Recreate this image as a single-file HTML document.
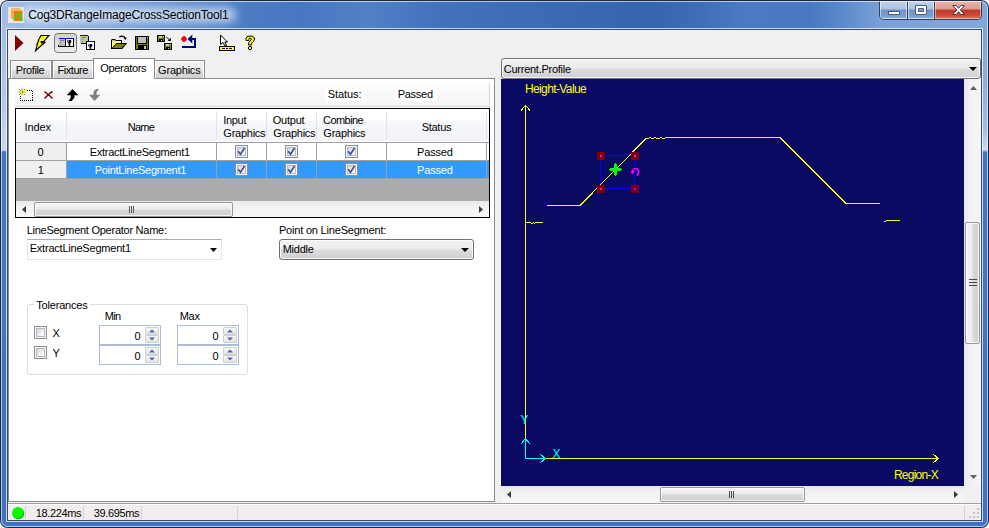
<!DOCTYPE html>
<html><head><meta charset="utf-8"><title>Cog3DRangeImageCrossSectionTool1</title>
<style>
*{box-sizing:border-box;margin:0;padding:0}
html,body{width:989px;height:528px;overflow:hidden;background:#fff}
body{font-family:"Liberation Sans","DejaVu Sans",sans-serif;font-size:11px;color:#000;position:relative}
#win{position:absolute;left:0;top:0;width:989px;height:528px;border-radius:8px;overflow:hidden;background:#3f72c2}
#win div,#win span,#win svg{position:absolute}
.t{white-space:nowrap;line-height:13px;font-size:11px}
#tbar{left:0;top:0;width:989px;height:30px;background:linear-gradient(90deg,#a4c0e8 0,#4a7bc3 250px,#4878c0 300px,#5080c6 370px,#4272bb 440px,#3e6eb8 500px,#3565ae 650px,#3e6eb8 700px,#4a7bc3 745px,#4979c2 810px,#5686ca 835px,#6b95d2 862px,#7ba1d8 882px,#82a7db 989px)}
#tgl{left:22px;top:8px;width:214px;height:14px;border-radius:7px;background:rgba(255,255,255,.66);filter:blur(5px)}
#fl{left:0;top:30px;width:8px;height:498px;background:linear-gradient(180deg,#a2bfe7 0,#b0c8eb 70px,#c8d8f0 120px,#4377c4 122px,#3f72c2 100%)}
#fr{left:981px;top:30px;width:8px;height:498px;background:linear-gradient(180deg,#7ea2d7 0,#9fbbe4 95px,#c9d9f0 120px,#4377c4 122px,#3f72c2 100%)}
#fb{left:0;top:520px;width:989px;height:8px;background:#3f72c2}
#fline{left:0;top:0;width:989px;height:528px;border-radius:8px;box-shadow:inset 0 0 0 1px #1a2843,inset 0 0 0 2px rgba(255,255,255,.62)}
#client{left:8px;top:30px;width:973px;height:490px;background:#f0f0f0;box-shadow:0 0 0 1px #3d4c68,0 0 0 2px rgba(255,255,255,.7)}
/* caption buttons */
#cap{left:879px;top:0;width:103px;height:20px;border:1px solid #34425e;border-top:0;border-radius:0 0 5px 5px;overflow:hidden;background:#6d92c6}
#cap div{top:0;height:19px}
.cb{background:linear-gradient(180deg,#c3d3ea 0,#aec3e2 48%,#6e93c7 52%,#7b9fd0 85%,#98b5dd 100%);box-shadow:inset 0 0 0 1px rgba(255,255,255,.55)}
#cbx{background:linear-gradient(180deg,#ecb9b0 0,#dc9a90 48%,#c2382a 52%,#cb4936 80%,#de7a5e 100%);box-shadow:inset 0 0 0 1px rgba(255,255,255,.45)}
/* tabs */
.tab{top:60px;height:18px;border:1px solid #898c95;border-bottom:0;background:linear-gradient(180deg,#f2f2f2 0,#ebebeb 9px,#dddddd 10px,#cfcfcf 100%);box-shadow:inset 1px 1px 0 #fcfcfc,inset -1px 0 0 #fcfcfc}
#tabsel{left:93px;top:58px;width:62px;height:21px;border:1px solid #898c95;border-bottom:0;background:#fff}
#tabpage{left:8px;top:78px;width:487px;height:424px;border:1px solid #898c95;background:#fff}
/* grid */
#grid{left:15px;top:108px;width:475px;height:110px;border:1px solid #000;background:#ababab;overflow:hidden}
.vl{width:1px;background:#a0a0a0}
.hl{height:1px;background:#a0a0a0}
.chk{width:13px;height:13px;border:1px solid #8e8f8f;background:#f4f4f4;box-shadow:inset 0 0 0 1px #f4f4f4}
.chk i{position:absolute;left:1px;top:1px;width:9px;height:9px;background:linear-gradient(135deg,#cfd3d9,#f2f2f2 60%,#fcfcfc);border:1px solid #b5bcc6}
.btn{border:1px solid #707070;border-radius:3px;background:linear-gradient(180deg,#f2f2f2 0,#ebebeb 48%,#dddddd 52%,#cfcfcf 100%);box-shadow:inset 0 0 0 1px rgba(255,255,255,.8)}
.num{width:62px;height:20px;border:1px solid #abbcd8;background:#fff}
.sb{background:#f0f0f0}
.thh{border:1px solid #979797;border-radius:2px;background:linear-gradient(180deg,#f7f7f7 0,#e9e9e9 48%,#d9d9d9 52%,#cfcfcf 100%);box-shadow:inset 0 0 0 1px rgba(255,255,255,.75)}
.thv{border:1px solid #979797;border-radius:2px;background:linear-gradient(90deg,#f7f7f7 0,#e9e9e9 48%,#d9d9d9 52%,#cfcfcf 100%);box-shadow:inset 0 0 0 1px rgba(255,255,255,.75)}
</style></head><body>
<div id="win">
<div id="tbar"></div><div id="tgl"></div><div id="fl"></div><div id="fr"></div><div id="fb"></div>
<div id="client"></div>
<svg style="left:8px;top:7px" width="16" height="16" viewBox="0 0 16 16">
<rect x="0" y="0" width="16" height="16" fill="#e9e6e2"/>
<polygon points="3,1 6,4 6,14 3,10.500" fill="#f9aa4e"/>
<polygon points="3,1 12,1 14.500,4 6,4" fill="#fbb55e"/>
<rect x="6" y="4" width="8.500" height="10" fill="#e07b10"/>
<polyline points="6,12.500 9.800,7.500 13.300,7.500 13.300,12.500 15,12.500" fill="none" stroke="#08f020" stroke-width="1.300"/>
</svg>
<div id="cap">
<div class="cb" style="left:0;width:27px"></div>
<div style="left:27px;width:1px;background:#34425e"></div>
<div class="cb" style="left:28px;width:26px"></div>
<div style="left:54px;width:1px;background:#34425e"></div>
<div id="cbx" style="left:55px;width:46px"></div>
</div>
<svg style="left:879px;top:0" width="103" height="20" viewBox="879 0 103 20">
<rect x="888.5" y="11.5" width="11" height="3" fill="#fff" stroke="#4b5a78" stroke-width="1"/>
<path d="M915.5 5.500h11v9h-11z M918.5 8.500v3h5v-3z" fill="#fff" fill-rule="evenodd" stroke="#4b5a78" stroke-width="1"/>
<path d="M952.700 5.500h3.600l2.300 2.800 2.300-2.800h3.600l-4.100 4.500 4.100 4.500h-3.600l-2.300-2.800-2.300 2.800h-3.600l4.100-4.500z" fill="#fff" stroke="#53363a" stroke-width="1" stroke-linejoin="round"/>
</svg>

<svg style="left:8px;top:30px" width="260" height="27" viewBox="8 30 260 27" shape-rendering="crispEdges">
<defs><linearGradient id="pb" x1="0" y1="0" x2="0" y2="1"><stop offset="0" stop-color="#d0d0d0"/><stop offset="1" stop-color="#ececec"/></linearGradient>
<pattern id="dith" width="2" height="2" patternUnits="userSpaceOnUse"><rect width="2" height="2" fill="#ffff00"/><rect width="1" height="1" fill="#fff"/><rect x="1" y="1" width="1" height="1" fill="#fff"/></pattern></defs>
<!-- run -->
<polygon points="15,35 23.500,43 15,51" fill="#800000" shape-rendering="auto"/>
<!-- lightning -->
<polygon points="41,35.500 49,35.500 43.800,41.400 45,42.200 35.500,50.700 37.300,44.800 36.800,44.600 38.700,40.600 38.300,40.300" fill="#ffff00" stroke="#000" stroke-width="1.150" shape-rendering="auto" stroke-linejoin="miter"/><polygon points="40.600,41.100 44.800,41.100 43,43.500 40.900,43.400" fill="#000" shape-rendering="auto"/>
<!-- pressed button -->
<rect x="54.500" y="33.500" width="22" height="19" rx="3" fill="url(#pb)" stroke="#747474" shape-rendering="auto"/>
<rect x="59" y="38" width="15" height="9" fill="#000"/><rect x="58" y="45" width="1" height="2" fill="#000"/>
<rect x="59" y="38" width="6" height="1" fill="#0000ff"/><rect x="66" y="38" width="7" height="1" fill="#0000ff"/>
<rect x="59" y="39" width="6" height="7" fill="#c0c0c0"/><rect x="66" y="39" width="7" height="7" fill="#fff"/>
<rect x="60" y="40" width="4" height="1" fill="#808080"/><rect x="60" y="42" width="1" height="1" fill="#808080"/><rect x="60" y="44" width="1" height="1" fill="#808080"/>
<g shape-rendering="auto"><rect x="67.300" y="40.100" width="4" height="2.800" rx=".8" fill="#000"/><rect x="68.600" y="42.500" width="1.700" height="3.200" fill="#000"/><circle cx="68.400" cy="41.200" r=".6" fill="#fff"/></g>
<!-- floating -->
<rect x="81" y="36" width="8" height="8" fill="#000"/><rect x="80" y="36" width="8" height="7" fill="#c0c0c0"/><rect x="80" y="35" width="8" height="1" fill="#0000c0"/>
<rect x="82" y="37" width="4" height="1" fill="#808080"/><rect x="82" y="39" width="1" height="1" fill="#808080"/><rect x="82" y="41" width="1" height="1" fill="#808080"/>
<rect x="86" y="41" width="9" height="9" fill="#000"/><rect x="87" y="42" width="7" height="7" fill="#fff"/><rect x="87" y="41" width="7" height="1" fill="#0000ff"/>
<g shape-rendering="auto"><rect x="88.300" y="44" width="4" height="2.700" rx=".8" fill="#000"/><rect x="89.600" y="46.300" width="1.700" height="2.600" fill="#000"/><circle cx="89.400" cy="45.100" r=".6" fill="#fff"/></g>
<!-- open -->
<g shape-rendering="auto">
<polygon points="111,40 112,39 115,39 116,40 122,40 122,43 127.200,43 122.300,49 111,49" fill="#000"/>
<polygon points="112,40.200 115,40.200 116,41 121,41 121,43 116.300,43 112,47.800" fill="url(#dith)"/>
<polygon points="112.600,48 116.400,44 125.200,44 121.600,48" fill="#808000"/>
<path d="M119.300 37.300 q3.200 -2.600 6 .6" fill="none" stroke="#000" stroke-width="1.100"/><polygon points="123.300,37.800 126.800,37.600 125.600,40" fill="#000"/>
</g>
<!-- save -->
<rect x="135" y="36" width="14" height="14" fill="#000"/><rect x="136" y="37" width="12" height="12" fill="#808000"/>
<rect x="137" y="37" width="10" height="7" fill="#000"/><rect x="138" y="37" width="8" height="6" fill="#c0c0c0"/><rect x="147" y="37" width="1" height="1" fill="#e0e0e0"/>
<rect x="138" y="45" width="9" height="4" fill="#000"/><rect x="144" y="46" width="2" height="3" fill="#c0c0c0"/>
<!-- save as -->
<rect x="157" y="35" width="8" height="7" fill="#000"/><rect x="158" y="36" width="6" height="5" fill="#808000"/><rect x="159" y="36" width="3" height="2" fill="#c0c0c0"/><rect x="159" y="39" width="4" height="2" fill="#000"/><rect x="161" y="40" width="1" height="1" fill="#c0c0c0"/>
<rect x="164" y="43" width="8" height="7" fill="#000"/><rect x="165" y="44" width="6" height="5" fill="#808000"/><rect x="166" y="44" width="3" height="2" fill="#c0c0c0"/><rect x="166" y="47" width="4" height="2" fill="#000"/><rect x="168" y="48" width="1" height="1" fill="#c0c0c0"/>
<path d="M166.300 37 l3.500 3" fill="none" stroke="#000" stroke-width="1" shape-rendering="auto"/><polygon points="170.900,37.800 170.900,40.900 167.600,40.900" fill="#000" shape-rendering="auto"/><rect x="163" y="36" width="1" height="1" fill="#e0e0e0"/><rect x="170" y="44" width="1" height="1" fill="#e0e0e0"/>
<!-- reset -->
<polygon points="184,35.600 187.200,38.900 184,42.200 180.800,38.900" fill="#ff0000" shape-rendering="auto"/><circle cx="184" cy="38.900" r="2.500" fill="#ff0000" shape-rendering="auto"/>
<polygon points="187.600,39 192.300,34.600 192.300,43.400" fill="#000080" shape-rendering="auto"/><rect x="192" y="38" width="4" height="2" fill="#000080"/><rect x="194" y="38" width="2" height="10" fill="#000080"/><rect x="182" y="46" width="14" height="2" fill="#000080"/>
<!-- pointer + bar -->
<polygon points="220.500,35 220.500,44.500 223,42.500 225,46 226.500,45.500 224.800,42 227.500,42" fill="#fff" stroke="#000" stroke-width="1" shape-rendering="auto"/>
<rect x="219.500" y="46.500" width="15" height="4" fill="#ffff00" stroke="#000" stroke-width="1"/>
<rect x="222" y="48" width="3" height="1" fill="#000"/><rect x="226" y="48" width="2" height="1" fill="#000"/><rect x="229" y="48" width="3" height="1" fill="#000"/>
<!-- help -->
<path d="M246 40.500 v-2 q0 -2.500 4 -2.500 q4.500 0 4.500 3 q0 2 -2 3.200 q-1 .8 -1 2 v.800 h-3 v-1.300 q0 -1.700 1.500 -2.700 q1.300 -.900 1.300 -1.800 q0 -1 -1.300 -1 q-1.200 0 -1.200 1.300 v1z" fill="#ffff00" stroke="#000" stroke-width="1" shape-rendering="auto"/>
<circle cx="250" cy="48" r="1.700" fill="#ffff00" stroke="#000" stroke-width="1" shape-rendering="auto"/>
</svg>

<div id="tabpage"></div>
<div class="tab" style="left:10px;width:42px"></div>
<div class="tab" style="left:52px;width:42px"></div>
<div class="tab" style="left:154px;width:51px"></div>
<div id="tabsel"></div>
<!-- toolstrip -->
<div style="left:15px;top:83px;width:475px;height:24px;background:linear-gradient(180deg,#fdfdfd,#f4f4f4);border-right:1px solid #d6d6d6;border-bottom:1px solid #d6d6d6"></div>
<div style="left:325px;top:88px;width:40px;height:13px;background:#fff"></div>
<div style="left:395px;top:88px;width:42px;height:13px;background:#fff"></div>
<svg style="left:15px;top:84px" width="100" height="22" viewBox="15 84 100 22">
<g shape-rendering="crispEdges">
<rect x="20.500" y="90.500" width="12" height="10" fill="none" stroke="#000" stroke-width="1" stroke-dasharray="1 1"/><rect x="18" y="87" width="8" height="8" fill="#fcfcfc"/>
<path d="M19 89 l6 6 M25 89 l-6 6 M22 88.500 v7 M18.500 92 h7" stroke="#808080" stroke-width="1" fill="none" shape-rendering="auto"/>
<rect x="20" y="91" width="2" height="2" fill="#ffff00"/><rect x="23" y="90" width="2" height="2" fill="#ffff00"/><rect x="22" y="93" width="2" height="2" fill="#ffff00"/><rect x="25" y="89" width="2" height="2" fill="#ffff00"/>
</g>
<path d="M44.500 91.500 l3 2.500 3 2.500 2 2 M52.500 91.500 l-2.500 1.500 -3 3 -2.500 2.500" stroke="#800000" stroke-width="1.500" fill="none"/>
<path d="M72.500 89 l5.800 6.200 h-3.800 v1.500 q0 1.500 -1.500 2.500 l-1.200 1.800 h-3.500 q2.500 -1.800 2.500 -4.300 v-1.500 h-4z" fill="#000"/>
<path d="M94.500 101 l5.800 -6.200 h-3.800 v-1.500 q0 -2 1.500 -2.800 l1 -1.500 h-2.500 q-3 1.300 -3 4.300 v1.500 h-4.500z" fill="#808080"/>
</svg>
<!-- grid -->
<div id="grid"></div>
<div style="left:16px;top:109px;width:473px;height:33px;background:linear-gradient(180deg,#fff 0,#fff 11px,#f6f7fa 12px,#f3f4f7 100%);border-bottom:1px solid #d5d5d5"></div>
<div style="left:16px;top:141px;width:473px;height:1px;background:#fff"></div>
<div style="left:16px;top:143px;width:50px;height:35px;background:#efefef"></div>
<div style="left:67px;top:143px;width:422px;height:17px;background:#fff"></div>
<div style="left:67px;top:161px;width:422px;height:17px;background:#3399ff"></div>
<div class="hl" style="left:16px;top:142px;width:473px"></div>
<div class="hl" style="left:16px;top:160px;width:473px"></div>
<div class="hl" style="left:16px;top:178px;width:473px"></div>
<div class="vl" style="left:66px;top:142px;height:37px"></div>
<div class="vl" style="left:216px;top:142px;height:37px"></div>
<div class="vl" style="left:266px;top:142px;height:37px"></div>
<div class="vl" style="left:316px;top:142px;height:37px"></div>
<div class="vl" style="left:386px;top:142px;height:37px"></div>
<div class="vl" style="left:486px;top:142px;height:37px"></div>
<div class="vl" style="left:66px;top:111px;height:28px;background:#e0e3e8"></div>
<div class="vl" style="left:216px;top:111px;height:28px;background:#e0e3e8"></div>
<div class="vl" style="left:266px;top:111px;height:28px;background:#e0e3e8"></div>
<div class="vl" style="left:316px;top:111px;height:28px;background:#e0e3e8"></div>
<div class="vl" style="left:386px;top:111px;height:28px;background:#e0e3e8"></div>
<div class="vl" style="left:486px;top:111px;height:28px;background:#e0e3e8"></div>
<div class="chk" style="left:235px;top:145px"><i></i><svg style="left:0;top:0" width="11" height="11" viewBox="0 0 11 11"><path d="M2.200 5.300 l2.300 3 l4 -6.300" fill="none" stroke="#3a4fa2" stroke-width="1.600" stroke-linecap="butt"/></svg></div>
<div class="chk" style="left:235px;top:163px"><i></i><svg style="left:0;top:0" width="11" height="11" viewBox="0 0 11 11"><path d="M2.200 5.300 l2.300 3 l4 -6.300" fill="none" stroke="#3a4fa2" stroke-width="1.600" stroke-linecap="butt"/></svg></div>
<div class="chk" style="left:285px;top:145px"><i></i><svg style="left:0;top:0" width="11" height="11" viewBox="0 0 11 11"><path d="M2.200 5.300 l2.300 3 l4 -6.300" fill="none" stroke="#3a4fa2" stroke-width="1.600" stroke-linecap="butt"/></svg></div>
<div class="chk" style="left:285px;top:163px"><i></i><svg style="left:0;top:0" width="11" height="11" viewBox="0 0 11 11"><path d="M2.200 5.300 l2.300 3 l4 -6.300" fill="none" stroke="#3a4fa2" stroke-width="1.600" stroke-linecap="butt"/></svg></div>
<div class="chk" style="left:345px;top:145px"><i></i><svg style="left:0;top:0" width="11" height="11" viewBox="0 0 11 11"><path d="M2.200 5.300 l2.300 3 l4 -6.300" fill="none" stroke="#3a4fa2" stroke-width="1.600" stroke-linecap="butt"/></svg></div>
<div class="chk" style="left:345px;top:163px"><i></i><svg style="left:0;top:0" width="11" height="11" viewBox="0 0 11 11"><path d="M2.200 5.300 l2.300 3 l4 -6.300" fill="none" stroke="#3a4fa2" stroke-width="1.600" stroke-linecap="butt"/></svg></div>
<!-- grid hscroll -->
<div class="sb" style="left:16px;top:201px;width:473px;height:16px;background:linear-gradient(180deg,#e9e9e9,#f3f3f3 40%,#f6f6f6)"></div>
<div class="thh" style="left:34px;top:202px;width:199px;height:15px"></div>
<svg style="left:16px;top:201px" width="473" height="16" viewBox="16 201 473 16">
<polygon points="22,209.500 26,206 26,213" fill="#3a3a3a"/>
<polygon points="483,209.500 479,206 479,213" fill="#3a3a3a"/>
<path d="M129.500 206 v7 M131.500 206 v7 M133.500 206 v7" stroke="#5a5a5a" stroke-width="1" shape-rendering="crispEdges"/>
</svg>
<!-- combos -->
<div style="left:27px;top:239px;width:195px;height:21px;background:#fff;border:1px solid #e3e4ea;border-top-color:#abadb3;border-radius:1px"></div>
<svg style="left:209px;top:247px" width="9" height="6" viewBox="209 247 9 6"><polygon points="210,248 217,248 213.500,252" fill="#000"/></svg>
<div class="btn" style="left:279px;top:239px;width:195px;height:21px"></div>
<svg style="left:460px;top:247px" width="10" height="6" viewBox="460 247 10 6"><polygon points="461,248 469,248 465,252" fill="#000"/></svg>
<!-- groupbox -->
<div style="left:27px;top:304px;width:221px;height:71px;border:1px solid #d5dfe5;border-radius:3px"></div>
<div style="left:34px;top:298px;width:56px;height:14px;background:#fff"></div>
<div class="chk" style="left:34px;top:326px"><i></i></div>
<div class="chk" style="left:34px;top:346px"><i></i></div>
<div class="num" style="left:99px;top:325px"></div>
<div class="num" style="left:99px;top:345px"></div>
<div class="num" style="left:177px;top:325px"></div>
<div class="num" style="left:177px;top:345px"></div>
<div style="left:145px;top:327px;width:14px;height:8px;border:1px solid #cfcfcf;border-radius:1px;background:linear-gradient(180deg,#f8f8f8,#e4e4e4)"></div>
<div style="left:145px;top:335px;width:14px;height:8px;border:1px solid #cfcfcf;border-radius:1px;background:linear-gradient(180deg,#f8f8f8,#e4e4e4)"></div>
<svg style="left:145px;top:327px" width="14" height="16" viewBox="0 0 14 16"><polygon points="4,5.500 7,2.500 10,5.500" fill="#4a62b4"/><polygon points="4,10.500 7,13.500 10,10.500" fill="#4a62b4"/></svg>
<div style="left:145px;top:347px;width:14px;height:8px;border:1px solid #cfcfcf;border-radius:1px;background:linear-gradient(180deg,#f8f8f8,#e4e4e4)"></div>
<div style="left:145px;top:355px;width:14px;height:8px;border:1px solid #cfcfcf;border-radius:1px;background:linear-gradient(180deg,#f8f8f8,#e4e4e4)"></div>
<svg style="left:145px;top:347px" width="14" height="16" viewBox="0 0 14 16"><polygon points="4,5.500 7,2.500 10,5.500" fill="#4a62b4"/><polygon points="4,10.500 7,13.500 10,10.500" fill="#4a62b4"/></svg>
<div style="left:223px;top:327px;width:14px;height:8px;border:1px solid #cfcfcf;border-radius:1px;background:linear-gradient(180deg,#f8f8f8,#e4e4e4)"></div>
<div style="left:223px;top:335px;width:14px;height:8px;border:1px solid #cfcfcf;border-radius:1px;background:linear-gradient(180deg,#f8f8f8,#e4e4e4)"></div>
<svg style="left:223px;top:327px" width="14" height="16" viewBox="0 0 14 16"><polygon points="4,5.500 7,2.500 10,5.500" fill="#4a62b4"/><polygon points="4,10.500 7,13.500 10,10.500" fill="#4a62b4"/></svg>
<div style="left:223px;top:347px;width:14px;height:8px;border:1px solid #cfcfcf;border-radius:1px;background:linear-gradient(180deg,#f8f8f8,#e4e4e4)"></div>
<div style="left:223px;top:355px;width:14px;height:8px;border:1px solid #cfcfcf;border-radius:1px;background:linear-gradient(180deg,#f8f8f8,#e4e4e4)"></div>
<svg style="left:223px;top:347px" width="14" height="16" viewBox="0 0 14 16"><polygon points="4,5.500 7,2.500 10,5.500" fill="#4a62b4"/><polygon points="4,10.500 7,13.500 10,10.500" fill="#4a62b4"/></svg>

<div class="btn" style="left:501px;top:58px;width:480px;height:21px"></div>
<svg style="left:968px;top:66px" width="10" height="6" viewBox="968 66 10 6"><polygon points="969,67 977,67 973,71" fill="#000"/></svg>
<div style="left:501px;top:79px;width:463px;height:407px;background:#0a0a64"></div>
<svg style="left:501px;top:79px" width="463" height="407" viewBox="501 79 463 407" shape-rendering="crispEdges">
<rect x="600.500" y="155.500" width="34" height="33" fill="none" stroke="#0000ff"/>
<g fill="none" stroke="#ffff00" stroke-width="1">
<path d="M525.500 105 V459 M525 458.500 H939"/>
<path d="M521 110.500 L525.500 105.500 L530 110.500 M933 454 L938.500 458.500 L933 463"/>
<path d="M526 222.500 H531 M531 223.500 H533 M533 222.500 H534 M534 223.500 H535 M535 222.500 H543"/>
<path d="M547 205.500 H580 L646 138.500 H649 M649 137.500 H651 M651 138.500 H654 M654 137.500 H656 M656 138.500 H660 M660 137.500 H662 M662 138.500 H665 M665 137.500 H780 L846 203.500 H880"/>
<path d="M884 221.500 H886 M886 220.500 H900"/>
</g>
<g fill="none" stroke="#00ffff" stroke-width="1">
<path d="M525.500 438 V459 M525 458.500 H546"/>
<path d="M521 444 L525.500 438.500 L530 444 M540 454 L545.500 458.500 L540 463"/>
</g>
<g fill="#800000"><rect x="597" y="152" width="8" height="8"/><rect x="631" y="152" width="8" height="8"/><rect x="597" y="185" width="8" height="8"/><rect x="631" y="185" width="8" height="8"/></g>
<g fill="#ff00ff"><rect x="600" y="155" width="2" height="2"/><rect x="634" y="155" width="2" height="2" fill="#d020ff"/><rect x="600" y="188" width="2" height="2"/><rect x="634" y="188" width="2" height="2" fill="#7020ff"/></g>
<g fill="#00ff00"><rect x="614" y="164" width="3" height="11"/><rect x="610" y="168" width="11" height="3"/><rect x="615" y="163" width="1" height="13"/><rect x="609" y="169" width="13" height="1"/></g>
<g shape-rendering="auto"><path d="M637.200 174.300 a3.100 3.100 0 1 0 -4.600 -2.300" fill="none" stroke="#ff00ff" stroke-width="1.400"/><polygon points="630.500,170.800 634.800,171.200 632.300,174.500" fill="#ff00ff"/><path d="M636.500 175 h2.500" stroke="#ff00ff" stroke-width="1.200"/></g>
</svg>
<!-- v scroll -->
<div style="left:964px;top:79px;width:17px;height:407px;background:linear-gradient(90deg,#e6e6e6,#f1f1f1 30%,#f6f6f6)"></div>
<div class="thv" style="left:965px;top:222px;width:15px;height:122px"></div>
<svg style="left:964px;top:79px" width="17" height="407" viewBox="964 79 17 407">
<polygon points="970,90 973.500,86 977,90" fill="#606060"/>
<polygon points="970,475 973.500,479 977,475" fill="#606060"/>
<path d="M969 279.500 h8 M969 282.500 h8 M969 285.500 h8" stroke="#4a4a4a" stroke-width="1" shape-rendering="crispEdges"/>
</svg>
<!-- h scroll -->
<div style="left:501px;top:486px;width:463px;height:17px;background:linear-gradient(180deg,#e6e6e6,#f1f1f1 30%,#f6f6f6)"></div>
<div style="left:964px;top:486px;width:17px;height:17px;background:#f0f0f0"></div>
<div class="thh" style="left:660px;top:487px;width:145px;height:15px"></div>
<svg style="left:501px;top:486px" width="463" height="17" viewBox="501 486 463 17">
<polygon points="507,494.500 511,491 511,498" fill="#3a3a3a"/>
<polygon points="958,494.500 954,491 954,498" fill="#3a3a3a"/>
<path d="M729.500 491 v7 M731.500 491 v7 M733.500 491 v7" stroke="#4a4a4a" stroke-width="1" shape-rendering="crispEdges"/>
</svg>

<div style="left:8px;top:503px;width:973px;height:17px;background:#f1eded;border-top:1px solid #a0a0a0;box-shadow:inset 0 1px 0 #fff"></div>
<div style="left:25px;top:506px;width:1px;height:13px;background:#d6d2d2"></div>
<div style="left:83px;top:506px;width:1px;height:13px;background:#d6d2d2"></div>
<div style="left:141px;top:506px;width:1px;height:13px;background:#d6d2d2"></div>
<div style="left:237px;top:506px;width:1px;height:13px;background:#d6d2d2"></div>
<div style="left:964px;top:506px;width:1px;height:13px;background:#d6d2d2"></div>
<svg style="left:10px;top:505px" width="16" height="15" viewBox="10 505 16 15">
<circle cx="18.300" cy="513.300" r="5.900" fill="#00a000"/>
<circle cx="17.800" cy="512.700" r="5.700" fill="#00ff00"/>
</svg>
<svg style="left:968px;top:507px" width="13" height="13" viewBox="968 507 13 13" shape-rendering="crispEdges">
<g fill="#c8c4c4"><rect x="977" y="516" width="2" height="2"/><rect x="973" y="516" width="2" height="2"/><rect x="977" y="512" width="2" height="2"/><rect x="969" y="516" width="2" height="2"/><rect x="973" y="512" width="2" height="2"/><rect x="977" y="508" width="2" height="2"/></g>
</svg>

<span class="t" id="ttl" style="left:28.17px;top:9px;letter-spacing:-0.183px;font-size:12px">Cog3DRangeImageCrossSectionTool1</span>
<span class="t" id="tb1" style="left:15.68px;top:64px;letter-spacing:-0.365px;">Profile</span>
<span class="t" id="tb2" style="left:57.45px;top:64px;letter-spacing:-0.435px;">Fixture</span>
<span class="t" id="tb3" style="left:100.36px;top:62px;letter-spacing:-0.342px;">Operators</span>
<span class="t" id="tb4" style="left:158.10px;top:64px;letter-spacing:-0.207px;">Graphics</span>
<span class="t" id="st1" style="left:327.63px;top:88px;letter-spacing:-0.043px;">Status:</span>
<span class="t" id="st2" style="left:397.63px;top:88px;letter-spacing:-0.263px;">Passed</span>
<span class="t" id="h1" style="left:24.55px;top:121px;letter-spacing:-0.144px;">Index</span>
<span class="t" id="h2" style="left:127.68px;top:121px;letter-spacing:-0.703px;">Name</span>
<span class="t" id="h3a" style="left:223.36px;top:114px;letter-spacing:-0.347px;">Input</span>
<span class="t" id="h3b" style="left:223.34px;top:127px;letter-spacing:-0.250px;">Graphics</span>
<span class="t" id="h4a" style="left:272.75px;top:114px;letter-spacing:-0.239px;">Output</span>
<span class="t" id="h4b" style="left:273.34px;top:127px;letter-spacing:-0.250px;">Graphics</span>
<span class="t" id="h5a" style="left:323.07px;top:114px;letter-spacing:-0.560px;">Combine</span>
<span class="t" id="h5b" style="left:323.34px;top:127px;letter-spacing:-0.250px;">Graphics</span>
<span class="t" id="h6" style="left:421.63px;top:121px;letter-spacing:-0.261px;">Status</span>
<span class="t" id="r0a" style="left:37.40px;top:146px;letter-spacing:0.000px;">0</span>
<span class="t" id="r0b" style="left:89.63px;top:146px;letter-spacing:-0.261px;">ExtractLineSegment1</span>
<span class="t" id="r0c" style="left:417.10px;top:146px;letter-spacing:-0.204px;">Passed</span>
<span class="t" id="r1a" style="left:37.86px;top:164px;letter-spacing:0.000px;">1</span>
<span class="t" id="r1b" style="left:94.63px;top:164px;letter-spacing:-0.272px;color:#fff">PointLineSegment1</span>
<span class="t" id="r1c" style="left:417.10px;top:164px;letter-spacing:-0.204px;color:#fff">Passed</span>
<span class="t" id="l1" style="left:26.66px;top:224px;letter-spacing:-0.257px;">LineSegment Operator Name:</span>
<span class="t" id="l2" style="left:278.97px;top:224px;letter-spacing:-0.196px;">Point on LineSegment:</span>
<span class="t" id="c1" style="left:29.70px;top:242px;letter-spacing:-0.213px;">ExtractLineSegment1</span>
<span class="t" id="c2" style="left:282.68px;top:243px;letter-spacing:-0.252px;">Middle</span>
<span class="t" id="g1" style="left:36.14px;top:299px;letter-spacing:-0.168px;background:#fff;">Tolerances</span>
<span class="t" id="g2" style="left:104.68px;top:310px;letter-spacing:-0.590px;">Min</span>
<span class="t" id="g3" style="left:179.70px;top:310px;letter-spacing:-0.261px;">Max</span>
<span class="t" id="g4" style="left:52.40px;top:327px;letter-spacing:0.000px;">X</span>
<span class="t" id="g5" style="left:52.56px;top:347px;letter-spacing:0.000px;">Y</span>
<span class="t" id="n1" style="left:134.40px;top:330px;letter-spacing:0.000px;">0</span>
<span class="t" id="n2" style="left:134.40px;top:350px;letter-spacing:0.000px;">0</span>
<span class="t" id="n3" style="left:212.40px;top:330px;letter-spacing:0.000px;">0</span>
<span class="t" id="n4" style="left:212.40px;top:350px;letter-spacing:0.000px;">0</span>
<span class="t" id="s1" style="left:35.77px;top:507px;letter-spacing:-0.352px;">18.224ms</span>
<span class="t" id="s2" style="left:93.73px;top:507px;letter-spacing:-0.372px;">39.695ms</span>
<span class="t" id="cp" style="left:503.83px;top:63px;letter-spacing:-0.267px;">Current.Profile</span>
<span class="t" id="d1" style="left:524.92px;top:83px;letter-spacing:-0.609px;color:#ff0;font-size:12px">Height-Value</span>
<span class="t" id="d2" style="left:893.92px;top:469px;letter-spacing:-0.745px;color:#ff0;font-size:12px">Region-X</span>
<span class="t" id="d3" style="left:552.48px;top:448px;letter-spacing:0.000px;color:#0ff;font-size:12px">X</span>
<span class="t" id="d4" style="left:520.55px;top:414px;letter-spacing:0.000px;color:#0ff;font-size:12px">Y</span>
<div id="fline"></div>
</div>
</body></html>
